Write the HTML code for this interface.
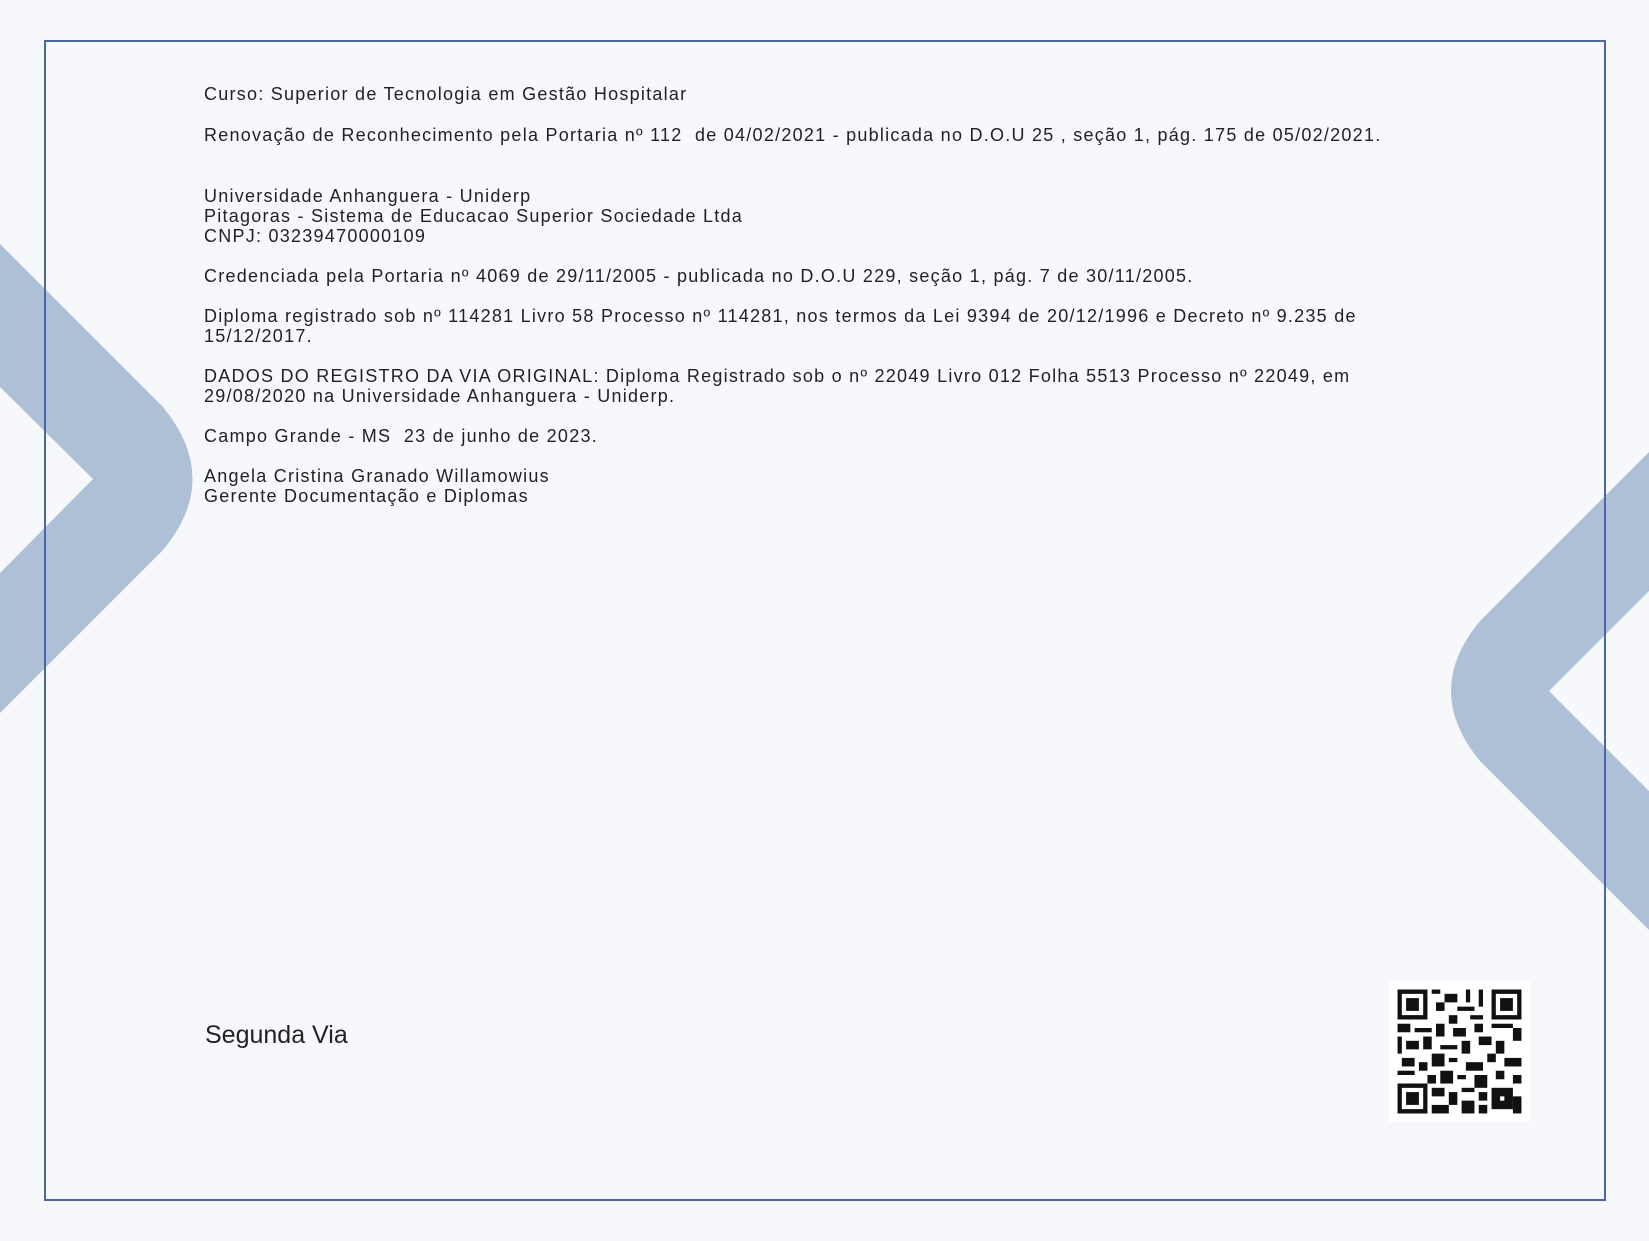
<!DOCTYPE html>
<html><head><meta charset="utf-8"><style>
html,body{margin:0;padding:0;}
body{width:1649px;height:1241px;background:#f7f8fb;position:relative;overflow:hidden;font-family:"Liberation Sans",sans-serif;color:#222;}
svg.bg{position:absolute;left:0;top:0;}
.border{position:absolute;left:44px;top:40px;width:1558px;height:1157px;border:2px solid #4a67ad;}
.t{position:absolute;left:204px;font-size:18px;letter-spacing:1.25px;line-height:20px;white-space:nowrap;}
.sv{position:absolute;left:205px;top:1021px;font-size:25px;}
</style></head><body>
<svg class="bg" width="1649" height="1241">
<g fill="#adc0d6">
<path d="M0,244 L163,407 Q222,479 163,550 L0,713 L0,573 L93,479 L0,387 Z"/>
<path d="M1649,452 L1480,621 Q1422,691 1480,761 L1649,930 L1649,791 L1549,691 L1649,591 Z"/>
</g>
</svg>
<div class="border"></div>
<div class="t" style="top:84px">Curso: Superior de Tecnologia em Gestão Hospitalar</div>
<div class="t" style="top:125px">Renovação de Reconhecimento pela Portaria nº 112&nbsp; de 04/02/2021 - publicada no D.O.U 25 , seção 1, pág. 175 de 05/02/2021.</div>
<div class="t" style="top:186px">Universidade Anhanguera - Uniderp<br>Pitagoras - Sistema de Educacao Superior Sociedade Ltda<br>CNPJ: 03239470000109</div>
<div class="t" style="top:266px">Credenciada pela Portaria nº 4069 de 29/11/2005 - publicada no D.O.U 229, seção 1, pág. 7 de 30/11/2005.</div>
<div class="t" style="top:306px">Diploma registrado sob nº 114281 Livro 58 Processo nº 114281, nos termos da Lei 9394 de 20/12/1996 e Decreto nº 9.235 de<br>15/12/2017.</div>
<div class="t" style="top:366px">DADOS DO REGISTRO DA VIA ORIGINAL: Diploma Registrado sob o nº 22049 Livro 012 Folha 5513 Processo nº 22049, em<br>29/08/2020 na Universidade Anhanguera - Uniderp.</div>
<div class="t" style="top:426px">Campo Grande - MS&nbsp; 23 de junho de 2023.</div>
<div class="t" style="top:466px">Angela Cristina Granado Willamowius<br>Gerente Documentação e Diplomas</div>
<div class="sv">Segunda Via</div>
<svg style="position:absolute;left:1389px;top:981px" width="141" height="141" viewBox="0 0 33 33">
<rect width="33" height="33" fill="#fff"/>
<g fill="#111">
<path d="M2,2h7v7h-7z M3,3v5h5v-5z" fill-rule="evenodd"/><rect x="4" y="4" width="3" height="3"/>
<path d="M24,2h7v7h-7z M25,3v5h5v-5z" fill-rule="evenodd"/><rect x="26" y="4" width="3" height="3"/>
<path d="M2,24h7v7h-7z M3,25v5h5v-5z" fill-rule="evenodd"/><rect x="4" y="26" width="3" height="3"/>
<rect x="10" y="2" width="2" height="1"/><rect x="13" y="3" width="3" height="2"/><rect x="18" y="2" width="1" height="3"/><rect x="21" y="2" width="1" height="4"/><rect x="11" y="5" width="2" height="2"/><rect x="16" y="6" width="4" height="1"/><rect x="14" y="8" width="2" height="2"/><rect x="19" y="8" width="3" height="1"/>
<rect x="2" y="10" width="3" height="2"/><rect x="6" y="11" width="4" height="1"/><rect x="11" y="10" width="2" height="3"/><rect x="15" y="11" width="3" height="2"/><rect x="20" y="10" width="2" height="2"/><rect x="24" y="10" width="5" height="1"/><rect x="29" y="11" width="2" height="3"/>
<rect x="2" y="13" width="1" height="4"/><rect x="4" y="14" width="3" height="2"/><rect x="8" y="13" width="2" height="3"/><rect x="12" y="15" width="4" height="1"/><rect x="17" y="14" width="2" height="3"/><rect x="21" y="13" width="3" height="2"/><rect x="25" y="14" width="2" height="3"/>
<rect x="3" y="18" width="3" height="2"/><rect x="7" y="19" width="2" height="2"/><rect x="10" y="17" width="3" height="3"/><rect x="14" y="18" width="2" height="1"/><rect x="18" y="19" width="4" height="2"/><rect x="23" y="17" width="2" height="2"/><rect x="27" y="18" width="4" height="2"/>
<rect x="2" y="21" width="4" height="1"/><rect x="9" y="22" width="2" height="2"/><rect x="12" y="21" width="3" height="3"/><rect x="16" y="22" width="2" height="1"/><rect x="20" y="22" width="3" height="3"/><rect x="25" y="21" width="2" height="2"/><rect x="29" y="22" width="2" height="2"/>
<rect x="10" y="25" width="3" height="2"/><rect x="14" y="26" width="2" height="3"/><rect x="17" y="25" width="3" height="1"/><rect x="21" y="26" width="2" height="2"/><rect x="24" y="25" width="5" height="5"/><rect x="29" y="27" width="2" height="4"/>
<rect x="10" y="29" width="4" height="2"/><rect x="17" y="28" width="3" height="3"/><rect x="21" y="29" width="2" height="2"/>
</g>
<rect x="26" y="27" width="1" height="1" fill="#fff"/>
</svg>
</body></html>
